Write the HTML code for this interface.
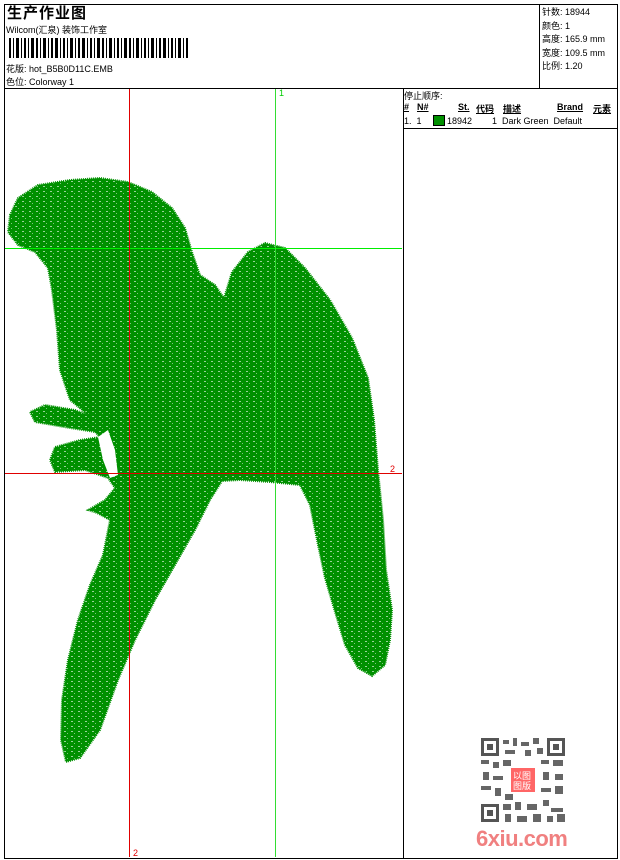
<!DOCTYPE html>
<html><head><meta charset="utf-8"><style>
*{margin:0;padding:0}
body{width:620px;height:860px;background:#fff;position:relative;overflow:hidden;font-family:"Liberation Sans","Noto Sans CJK SC",sans-serif;font-size:9px;color:#000}
.a{position:absolute;white-space:nowrap}
.box{position:absolute;border:1px solid #000}
</style></head><body>
<div class="box" style="left:4px;top:4px;width:612px;height:853px"></div>
<div class="a" style="left:4px;top:88px;width:613px;height:1px;background:#000"></div>
<div class="a" style="left:539px;top:4px;width:1px;height:84px;background:#000"></div>
<div class="a" style="left:403px;top:88px;width:1px;height:770px;background:#000"></div>
<div class="a" style="left:403px;top:128px;width:214px;height:1px;background:#000"></div>

<div class="a" style="left:7px;top:2px;font-size:15px;font-weight:bold;letter-spacing:1px">生产作业图</div>
<div class="a" style="left:6px;top:23px">Wilcom(汇泉) 装饰工作室</div>
<svg class="a" style="left:9px;top:38px" width="185" height="20">
<g fill="#000">
<rect x="0" y="0" width="2" height="20"/><rect x="4" y="0" width="1" height="20"/><rect x="7" y="0" width="3" height="20"/><rect x="12" y="0" width="1" height="20"/><rect x="15" y="0" width="2" height="20"/><rect x="19" y="0" width="1" height="20"/><rect x="22" y="0" width="3" height="20"/><rect x="27" y="0" width="2" height="20"/><rect x="31" y="0" width="1" height="20"/><rect x="34" y="0" width="3" height="20"/><rect x="39" y="0" width="1" height="20"/><rect x="42" y="0" width="2" height="20"/><rect x="46" y="0" width="3" height="20"/><rect x="51" y="0" width="1" height="20"/><rect x="54" y="0" width="2" height="20"/><rect x="58" y="0" width="1" height="20"/><rect x="61" y="0" width="3" height="20"/><rect x="66" y="0" width="1" height="20"/><rect x="69" y="0" width="2" height="20"/><rect x="73" y="0" width="3" height="20"/><rect x="78" y="0" width="1" height="20"/><rect x="81" y="0" width="2" height="20"/><rect x="85" y="0" width="1" height="20"/><rect x="88" y="0" width="3" height="20"/><rect x="93" y="0" width="2" height="20"/><rect x="97" y="0" width="1" height="20"/><rect x="100" y="0" width="3" height="20"/><rect x="105" y="0" width="1" height="20"/><rect x="108" y="0" width="2" height="20"/><rect x="112" y="0" width="1" height="20"/><rect x="115" y="0" width="3" height="20"/><rect x="120" y="0" width="2" height="20"/><rect x="124" y="0" width="1" height="20"/><rect x="127" y="0" width="3" height="20"/><rect x="132" y="0" width="1" height="20"/><rect x="135" y="0" width="2" height="20"/><rect x="139" y="0" width="1" height="20"/><rect x="142" y="0" width="3" height="20"/><rect x="147" y="0" width="1" height="20"/><rect x="150" y="0" width="2" height="20"/><rect x="154" y="0" width="3" height="20"/><rect x="159" y="0" width="1" height="20"/><rect x="162" y="0" width="2" height="20"/><rect x="166" y="0" width="1" height="20"/><rect x="169" y="0" width="3" height="20"/><rect x="174" y="0" width="1" height="20"/><rect x="177" y="0" width="2" height="20"/></g></svg>
<div class="a" style="left:6px;top:62px">花版: hot_B5B0D11C.EMB</div>
<div class="a" style="left:6px;top:75px">色位: Colorway 1</div>

<div class="a" style="left:542px;top:6px;line-height:13.5px">针数: 18944<br>颜色: 1<br>高度: 165.9 mm<br>宽度: 109.5 mm<br>比例: 1.20</div>

<div class="a" style="left:404px;top:89px">停止顺序:</div>
<div class="a" style="left:404px;top:102px;font-weight:bold;text-decoration:underline">#</div>
<div class="a" style="left:417px;top:102px;font-weight:bold;text-decoration:underline">N#</div>
<div class="a" style="left:458px;top:102px;font-weight:bold;text-decoration:underline">St.</div>
<div class="a" style="left:476px;top:102px;font-weight:bold;text-decoration:underline">代码</div>
<div class="a" style="left:503px;top:102px;font-weight:bold;text-decoration:underline">描述</div>
<div class="a" style="left:557px;top:102px;font-weight:bold;text-decoration:underline">Brand</div>
<div class="a" style="left:593px;top:102px;font-weight:bold;text-decoration:underline">元素</div>
<div class="a" style="left:404px;top:116px">1.&nbsp; 1</div>
<div class="a" style="left:433px;top:115px;width:10px;height:9px;background:#009000;border:1px solid #000"></div>
<div class="a" style="left:447px;top:116px">18942</div>
<div class="a" style="left:492px;top:116px">1&nbsp; Dark Green&nbsp; Default</div>

<svg class="a" style="left:0;top:0" width="620" height="860">
<defs>
<pattern id="p" width="7" height="5" patternUnits="userSpaceOnUse">
<rect width="7" height="5" fill="#009000"/>
<rect x="1" y="1" width="2" height="1" fill="#fff" opacity="0.6"/>
<rect x="4" y="3" width="1" height="1" fill="#fff" opacity="0.5"/>
</pattern>
</defs>
<path fill="url(#p)" stroke="#009000" stroke-width="2" stroke-dasharray="1 1" d="M10,215 L18,198 L38,185 L70,180 L100,178 L128,182 L152,192 L172,208 L185,228 L192,252 L200,275 L215,285 L224,298 L232,272 L248,252 L265,243 L285,248 L305,268 L330,300 L352,338 L368,378 L374,420 L378,470 L383,520 L386,570 L392,610 L390,640 L385,665 L372,676 L358,668 L345,645 L335,612 L325,578 L318,545 L310,505 L300,485 L270,482 L240,480 L222,481 L210,500 L195,530 L175,565 L155,600 L135,640 L118,680 L100,730 L80,758 L66,762 L61,740 L62,700 L68,660 L78,620 L90,585 L103,555 L110,520 L97,513 L88,510 L105,500 L115,488 L108,478 L85,470 L55,472 L50,460 L55,447 L80,440 L100,437 L95,432 L70,428 L35,422 L30,412 L45,405 L75,410 L88,415 L70,400 L60,370 L57,330 L52,290 L48,268 L35,252 L18,245 L8,232 Z"/>
<path fill="#fff" d="M98,437 L108,430 L115,450 L118,475 L110,478 L103,460 Z"/>
<line x1="5" y1="248.5" x2="402" y2="248.5" stroke="#00ee00" stroke-width="1"/>
<line x1="275.5" y1="89" x2="275.5" y2="857" stroke="#33dd33" stroke-width="1"/>
<line x1="129.5" y1="89" x2="129.5" y2="857" stroke="#e00000" stroke-width="1"/>
<line x1="5" y1="473.5" x2="402" y2="473.5" stroke="#e00000" stroke-width="1"/>
<text x="279" y="96" font-size="9" fill="#00cc00" font-family="Liberation Sans">1</text>
<text x="390" y="472" font-size="9" fill="#e00000" font-family="Liberation Sans">2</text>
<text x="133" y="856" font-size="9" fill="#e00000" font-family="Liberation Sans">2</text>
</svg>

<svg class="a" style="left:481px;top:738px" width="84" height="84">
<rect width="84" height="84" fill="#fff"/>
<g fill="#555">
<rect x="0" y="0" width="18" height="18"/><rect x="66" y="0" width="18" height="18"/><rect x="0" y="66" width="18" height="18"/>
</g>
<g fill="#fff"><rect x="3" y="3" width="12" height="12"/><rect x="69" y="3" width="12" height="12"/><rect x="3" y="69" width="12" height="12"/></g>
<g fill="#555"><rect x="6" y="6" width="6" height="6"/><rect x="72" y="6" width="6" height="6"/><rect x="6" y="72" width="6" height="6"/></g>
<g fill="#666">
<rect x="22" y="2" width="6" height="4"/><rect x="32" y="0" width="4" height="8"/><rect x="40" y="4" width="8" height="4"/><rect x="52" y="0" width="6" height="6"/><rect x="24" y="12" width="10" height="4"/><rect x="44" y="12" width="6" height="6"/><rect x="56" y="10" width="6" height="6"/>
<rect x="0" y="22" width="8" height="4"/><rect x="12" y="24" width="6" height="6"/><rect x="22" y="22" width="8" height="6"/><rect x="60" y="22" width="8" height="4"/><rect x="72" y="22" width="10" height="6"/>
<rect x="2" y="34" width="6" height="8"/><rect x="12" y="38" width="10" height="4"/><rect x="62" y="34" width="6" height="8"/><rect x="74" y="36" width="8" height="6"/>
<rect x="0" y="48" width="10" height="4"/><rect x="14" y="50" width="6" height="8"/><rect x="24" y="56" width="8" height="6"/><rect x="60" y="50" width="10" height="4"/><rect x="74" y="48" width="8" height="8"/>
<rect x="22" y="66" width="8" height="6"/><rect x="34" y="64" width="6" height="8"/><rect x="46" y="66" width="10" height="6"/><rect x="62" y="62" width="6" height="6"/><rect x="70" y="70" width="12" height="4"/>
<rect x="24" y="76" width="6" height="8"/><rect x="36" y="78" width="10" height="6"/><rect x="52" y="76" width="8" height="8"/><rect x="66" y="78" width="6" height="6"/><rect x="76" y="76" width="8" height="8"/>
</g>
<rect x="30" y="30" width="24" height="24" fill="#ff6666"/>
<text x="32" y="41" font-size="9" fill="#fff" font-family="Noto Sans CJK SC,sans-serif">以图</text>
<text x="32" y="51" font-size="9" fill="#fff" font-family="Noto Sans CJK SC,sans-serif">图版</text>
</svg>
<div class="a" style="left:476px;top:826px;font-size:22px;font-weight:bold;color:#f08080;letter-spacing:-0.5px">6xiu.com</div>
</body></html>
